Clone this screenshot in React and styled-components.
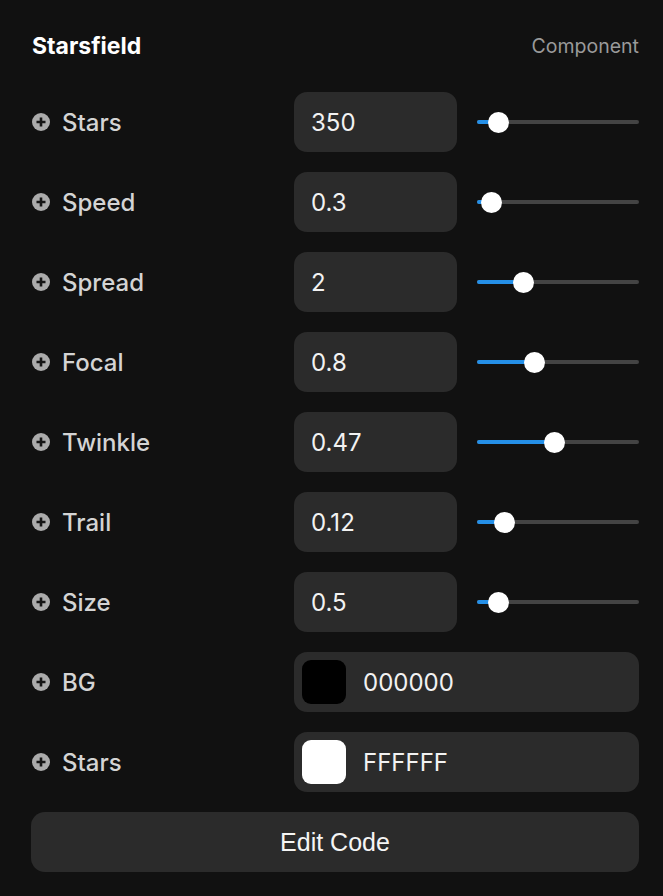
import styled, { createGlobalStyle } from "styled-components";

const Global = createGlobalStyle`
  html, body {
    margin: 0;
    background: #111111;
  }
  body {
    font-family: Inter, "Noto Sans", sans-serif;
  }
`

const Panel = styled.div`
  width: 663px;
  height: 896px;
  box-sizing: border-box;
  padding: 30px 24px 0 32px;
  background: #111111;
  color: #fff;
`

const Header = styled.div`
  display: flex;
  justify-content: space-between;
  align-items: center;
  height: 32px;
  margin-bottom: 30px;
`

const Title = styled.h2`
  margin: 0;
  font-size: 23px;
  font-weight: 700;
  color: #fff;
`

const Tag = styled.span`
  font-size: 19.5px;
  color: #9a9a9a;
`

const Grid = styled.div`
  display: grid;
  grid-template-columns: 242px 163px 1fr;
  column-gap: 20px;
  row-gap: 20px;
`

const Label = styled.div`
  display: flex;
  align-items: center;
  gap: 12px;
  height: 60px;
  font-size: 24px;
  font-weight: 500;
  color: #d4d4d4;
`

const Plus = styled.svg`
  width: 18px;
  height: 18px;
  flex-shrink: 0;
`

const Field = styled.div`
  height: 60px;
  box-sizing: border-box;
  border-radius: 13px;
  background: #2b2b2b;
  display: flex;
  align-items: center;
  padding: 0 17px;
  font-size: 24px;
  color: #f2f2f2;
  grid-column: ${(p) => (p.wide ? "2 / 4" : "auto")};
  gap: 17px;
  ${(p) => p.wide && "padding-left: 8px;"}
`

const Swatch = styled.div`
  width: 44px;
  height: 44px;
  border-radius: 9px;
  background: ${(p) => p.color};
`

const Slider = styled.div`
  position: relative;
  height: 60px;
  display: flex;
  align-items: center;
`

const Track = styled.div`
  position: relative;
  width: 100%;
  height: 4px;
  border-radius: 2px;
  background: #444444;
`

const Fill = styled.div`
  position: absolute;
  left: 0;
  top: 0;
  bottom: 0;
  border-radius: 2px;
  background: #2590e8;
`

const Thumb = styled.div`
  position: absolute;
  top: 50%;
  width: 21px;
  height: 21px;
  margin: -10.5px 0 0 -10.5px;
  border-radius: 50%;
  background: #ffffff;
`

const Button = styled.button`
  margin: 20px 0 0 -1px;
  width: calc(100% + 1px);
  height: 60px;
  border: none;
  border-radius: 14px;
  background: #2b2b2b;
  color: #f5f5f5;
  font-family: "Liberation Sans", Arial, sans-serif;
  font-size: 25px;
`

const PlusIcon = () => (
  <Plus viewBox="0 0 18 18">
    <circle cx="9" cy="9" r="9" fill="#ababab" />
    <path d="M9 4.5v9M4.5 9h9" stroke="#151515" strokeWidth="2.6" />
  </Plus>
);

const sliders = [
  { name: "Stars", value: "350", pos: 21 },
  { name: "Speed", value: "0.3", pos: 14 },
  { name: "Spread", value: "2", pos: 46 },
  { name: "Focal", value: "0.8", pos: 57 },
  { name: "Twinkle", value: "0.47", pos: 77 },
  { name: "Trail", value: "0.12", pos: 27 },
  { name: "Size", value: "0.5", pos: 21 },
];

const colors = [
  { name: "BG", value: "000000", color: "#000000" },
  { name: "Stars", value: "FFFFFF", color: "#ffffff" },
];

const App = () => {
  return (
    <Panel>
      <Global />
      <Header>
        <Title>Starsfield</Title>
        <Tag>Component</Tag>
      </Header>
      <Grid>
        {sliders.map((s, i) => (
          <>
            <Label key={"l" + i}>
              <PlusIcon />
              {s.name}
            </Label>
            <Field key={"f" + i}>{s.value}</Field>
            <Slider key={"s" + i}>
              <Track>
                <Fill style={{ width: s.pos + "px" }} />
                <Thumb style={{ left: s.pos + "px" }} />
              </Track>
            </Slider>
          </>
        ))}
        {colors.map((c, i) => (
          <>
            <Label key={"cl" + i}>
              <PlusIcon />
              {c.name}
            </Label>
            <Field key={"cf" + i} wide>
              <Swatch color={c.color} />
              {c.value}
            </Field>
          </>
        ))}
      </Grid>
      <Button>Edit Code</Button>
    </Panel>
  );
};

export default App;
